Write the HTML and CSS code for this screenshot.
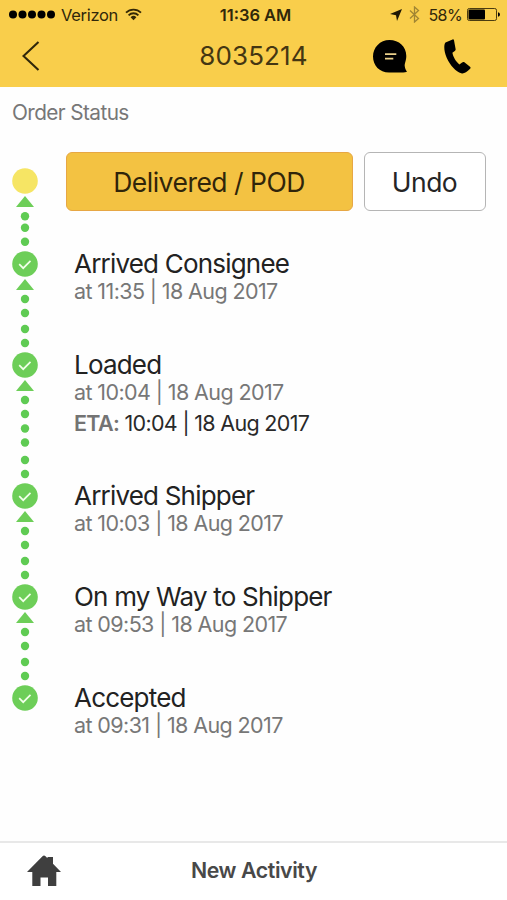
FILE: index.html
```html
<!DOCTYPE html>
<html lang="en">
<head>
<meta charset="utf-8">
<title>Order 8035214</title>
<link rel="stylesheet" href="styles.css">
</head>
<body>
<svg class="defs" aria-hidden="true">
  <symbol id="done" viewBox="0 0 26 26"><circle cx="13" cy="13" r="12.8" fill="#6dce58"/><path d="M7.2 13.2l4 4 7.3-7.4" fill="none" stroke="#f2ffe9" stroke-width="1.7"/></symbol>
  <symbol id="arrow" viewBox="0 0 18 11"><path d="M9 0l9 11H0z" fill="#6dce58"/></symbol>
</svg>
<header class="header">
  <div class="status">
    <div class="status-left">
      <svg class="signal" viewBox="0 0 47 9"><circle cx="4" cy="4.5" r="4"/><circle cx="13.5" cy="4.5" r="4"/><circle cx="23" cy="4.5" r="4"/><circle cx="32.5" cy="4.5" r="4"/><circle cx="42" cy="4.5" r="4"/></svg>
      <span class="carrier">Verizon</span>
      <svg class="wifi" viewBox="0 0 17 13"><path d="M1 4.7a10.6 10.6 0 0 1 15 0M3.6 7.3a6.9 6.9 0 0 1 9.8 0" fill="none" stroke="#332806" stroke-width="1.8"/><path d="M8.5 12.2L5.6 9.3a4.1 4.1 0 0 1 5.8 0z" fill="#332806"/></svg>
    </div>
    <span class="clock">11:36 AM</span>
    <div class="status-right">
      <svg class="location" viewBox="0 0 12 12"><path d="M12 0L7 12 6 6.2 0 5z" fill="#1e1704"/></svg>
      <svg class="bluetooth" viewBox="0 0 11 17"><path d="M1 4.5l8.500 8L5.500 16V1l4 3.500-8.500 8" fill="none" stroke="#a08533" stroke-width="1.3"/></svg>
      <span class="percent">58%</span>
      <svg class="battery" viewBox="0 0 33 13"><rect x=".5" y=".5" width="29" height="12" rx="1.8" fill="none" stroke="#4b3c10"/><rect x="1.5" y="1.5" width="16.5" height="10" rx="1"/><path d="M31 4.2q2 .4 2 2.3t-2 2.3z"/></svg>
    </div>
  </div>
  <div class="nav">
    <svg class="back" viewBox="0 0 18 30"><path d="M16.5 1L1.5 15l15 14" fill="none" stroke="#30270a" stroke-width="2.1"/></svg>
    <h1 class="title">8035214</h1>
    <div class="nav-actions">
      <svg class="chat" viewBox="0 0 34 33"><path d="M16.500 0C26 0 33.300 6.500 33.300 16c0 5-2 7.500-1.500 10.500.3 2 1 3.500 2.200 5.300-2 1-4 .7-6 .7H16C6.500 32.500 0 25.500 0 16.500S7 0 16.500 0z"/><path d="M12 14.100h11.300M12 18.700h8.300" stroke="#ead08a" stroke-width="1.700"/></svg>
      <svg class="phone" viewBox="0 0 27 35"><path d="M8.600.4L1.500 3.400C-.2 5-.4 12 2.800 19c3.400 7.500 9 13.600 14.500 15.300 2.400.8 5.200-1 8.800-4.500.7-.8.600-1.500-.1-2.100l-5.600-4.400c-.8-.6-1.600-.4-2.300.2l-2.700 1.900c-3.300-2.500-6.300-7.500-7-11.600l2.400-1.900c.7-.5 1-1.200.8-2L10 1.300c-.2-.8-.7-1.200-1.400-.9z"/></svg>
    </div>
  </div>
</header>
<main class="main">
  <h2 class="heading">Order Status</h2>
  <ol class="timeline">
    <li class="step first">
      <svg class="rail" viewBox="0 0 26 82.500"><circle cx="13" cy="13" r="12.800" fill="#f6e564"/><use href="#arrow" x="4" y="28" width="18" height="11"/><g fill="#5fcb53"><circle cx="13" cy="48.200" r="4.200"/><circle cx="13" cy="59.700" r="4.200"/><circle cx="13" cy="73.700" r="4.200"/></g></svg>
      <div class="actions"><button class="btn primary">Delivered / POD</button><button class="btn secondary">Undo</button></div>
    </li>
    <li class="step">
      <svg class="rail" viewBox="0 0 26 101"><use href="#done" width="26" height="26"/><use href="#arrow" x="4" y="28" width="18" height="11"/><g fill="#5fcb53"><circle cx="13" cy="48" r="4.200"/><circle cx="13" cy="62" r="4.200"/><circle cx="13" cy="78" r="4.200"/><circle cx="13" cy="92" r="4.200"/></g></svg>
      <div class="info"><h3 class="name">Arrived Consignee</h3><p class="time">at 11:35 | 18 Aug 2017</p></div>
    </li>
    <li class="step tall">
      <svg class="rail" viewBox="0 0 26 131"><use href="#done" width="26" height="26"/><use href="#arrow" x="4" y="28" width="18" height="11"/><g fill="#5fcb53"><circle cx="13" cy="48" r="4.200"/><circle cx="13" cy="62" r="4.200"/><circle cx="13" cy="76.500" r="4.200"/><circle cx="13" cy="90.500" r="4.200"/><circle cx="13" cy="108" r="4.200"/><circle cx="13" cy="122" r="4.200"/></g></svg>
      <div class="info"><h3 class="name">Loaded</h3><p class="time">at 10:04 | 18 Aug 2017</p><p class="time eta"><b>ETA:</b> 10:04 | 18 Aug 2017</p></div>
    </li>
    <li class="step">
      <svg class="rail" viewBox="0 0 26 101"><use href="#done" width="26" height="26"/><use href="#arrow" x="4" y="28" width="18" height="11"/><g fill="#5fcb53"><circle cx="13" cy="48" r="4.200"/><circle cx="13" cy="62" r="4.200"/><circle cx="13" cy="78" r="4.200"/><circle cx="13" cy="92" r="4.200"/></g></svg>
      <div class="info"><h3 class="name">Arrived Shipper</h3><p class="time">at 10:03 | 18 Aug 2017</p></div>
    </li>
    <li class="step">
      <svg class="rail" viewBox="0 0 26 101"><use href="#done" width="26" height="26"/><use href="#arrow" x="4" y="28" width="18" height="11"/><g fill="#5fcb53"><circle cx="13" cy="48" r="4.200"/><circle cx="13" cy="62" r="4.200"/><circle cx="13" cy="78" r="4.200"/><circle cx="13" cy="92" r="4.200"/></g></svg>
      <div class="info"><h3 class="name">On my Way to Shipper</h3><p class="time">at 09:53 | 18 Aug 2017</p></div>
    </li>
    <li class="step">
      <svg class="rail" viewBox="0 0 26 101"><use href="#done" width="26" height="26"/></svg>
      <div class="info"><h3 class="name">Accepted</h3><p class="time">at 09:31 | 18 Aug 2017</p></div>
    </li>
  </ol>
</main>
<footer class="footer">
  <svg class="home" viewBox="0 0 34 31"><path d="M0 17L15.500 1.200q1.500-1.500 3 0L20.500 3.200V2h5.500v6.700L34 17h-4.700v14H21v-8.500h-7.500V31H5.300V17z" fill="#3f3f3f"/></svg>
  <span class="new">New Activity</span>
</footer>
</body>
</html>
```
FILE: styles.css
```css
* { box-sizing: border-box; }
body {
  margin: 0;
  height: 900px;
  display: flex;
  flex-direction: column;
  background: #fefefe;
  font-family: Inter, "Liberation Sans", sans-serif;
  color: #222;
}
h1, h2, h3, p, ol { margin: 0; padding: 0; font-weight: 400; }
svg { display: block; flex: none; }
span, h1, h2, h3, p { white-space: nowrap; }
.defs { width: 0; height: 0; position: absolute; }

.header { height: 87px; flex: none; background: #f9ce4b; }
.status, .nav {
  display: grid;
  grid-template-columns: 1fr auto 1fr;
  align-items: center;
}
.status { height: 29px; padding: 0 7px 0 9px; color: #30270a; }
.status-left, .status-right { display: flex; align-items: center; }
.status-right { justify-content: flex-end; }
.signal { width: 47px; height: 9px; }
.carrier { margin-left: 5px; font-size: 16.500px; letter-spacing: -0.3px; }
.wifi { width: 17px; height: 13px; margin-left: 7px; }
.clock { padding-left: 2px; font-size: 16.500px; font-weight: 600; letter-spacing: 0; }
.location { width: 12px; height: 12px; }
.bluetooth { width: 11px; height: 17px; margin-left: 7px; }
.percent { margin-left: 8px; font-size: 16px; letter-spacing: -0.6px; }
.battery { width: 33px; height: 13px; margin-left: 5px; }

.nav { height: 54px; padding: 0 36px 0 22px; }
.back { width: 18px; height: 30px; }
.title { padding-left: 14px; font-size: 26px; line-height: 32px; letter-spacing: 0.1px; color: #443612; }
.nav-actions { display: flex; justify-content: flex-end; align-items: center; gap: 37px; }
.chat { width: 34px; height: 33px; }
.phone { width: 27px; height: 35px; }

.main { flex: 1; }
.heading { padding: 13px 12px 0; font-size: 20.800px; line-height: 26px; letter-spacing: -0.6px; color: #777; }
.timeline { list-style: none; padding: 42px 21px 0 12px; }
.step { display: flex; height: 101px; }
.first { height: 82.500px; }
.tall { height: 131px; }
.rail { width: 26px; height: 100%; }
.actions { flex: 1; display: flex; gap: 11px; margin: -16px 0 0 28px; }
.btn {
  height: 59px;
  padding: 0 1px 0 0;
  border: 1.500px solid #b5b5b5;
  border-radius: 6px;
  background: #fff;
  font: 400 26.500px/32px Inter, "Liberation Sans", sans-serif;
  letter-spacing: -0.5px;
  color: #252525;
}
.primary { width: 287px; border: 1.500px solid #e7a744; background: #f3c242; color: #30250a; }
.secondary { flex: 1; }
.info { padding-left: 36px; margin-top: -1px; }
.name { font-size: 26px; line-height: 28px; letter-spacing: -0.8px; }
.time { font-size: 21.500px; line-height: 26px; letter-spacing: -0.6px; color: #777; }
.eta { margin-top: 5px; letter-spacing: -0.68px; color: #292929; }
.eta b { font-weight: 600; color: #737373; }

.footer {
  height: 59px;
  flex: none;
  display: grid;
  grid-template-columns: 1fr auto 1fr;
  align-items: center;
  padding: 0 26px 0 27px;
  border-top: 2px solid #e8e8e8;
  background: #fff;
}
.home { width: 34px; height: 31px; margin-bottom: 2px; }
.new { padding-bottom: 3px; font-size: 21.300px; font-weight: 600; letter-spacing: -0.4px; color: #484848; }
```
